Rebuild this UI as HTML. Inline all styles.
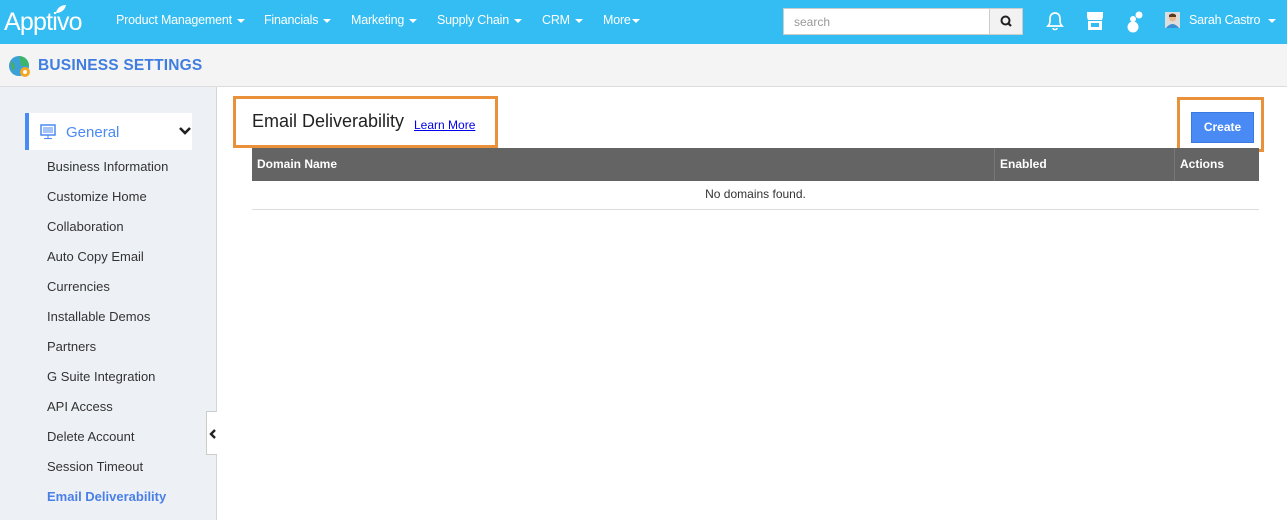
<!DOCTYPE html>
<html><head><meta charset="utf-8"><style>
*{margin:0;padding:0;box-sizing:border-box}
body{width:1287px;height:520px;overflow:hidden;font-family:"Liberation Sans",Arial,sans-serif;background:#fff;position:relative}
.top{position:absolute;left:0;top:0;width:1287px;height:44px;background:#33bdf2;color:#fff}
.logo{position:absolute;left:4px;top:8px;font-size:25px;letter-spacing:-0.8px}
.nav{position:absolute;top:13px;font-size:12.5px;letter-spacing:-0.2px}
.car{display:inline-block;width:0;height:0;border-left:4px solid transparent;border-right:4px solid transparent;border-top:4px solid #fff;vertical-align:middle;margin-left:5px}
.search{position:absolute;left:783px;top:8px;width:240px;height:27px;background:#fff;border:1px solid #ccc}
.search span{position:absolute;left:10px;top:6px;font-size:12px;color:#999}
.search .btn{position:absolute;right:0;top:0;width:33px;height:25px;background:#f2f2f2;border-left:1px solid #ccc}
.sub{position:absolute;left:0;top:44px;width:1287px;height:43px;background:#f4f4f4;border-bottom:1px solid #ddd}
.sub .t{position:absolute;left:38px;top:13px;font-size:15.5px;font-weight:bold;color:#3f7ee0;letter-spacing:0.2px}
.side{position:absolute;left:0;top:87px;width:217px;height:433px;background:#edf0f5;border-right:1px solid #d6d6d6}
.gen{position:absolute;left:25px;top:26px;width:167px;height:37px;background:#fff;border-left:4px solid #4a8af4}
.gen span{position:absolute;left:37px;top:11px;font-size:15px;color:#4a8af4}
.item{position:absolute;left:47px;font-size:13px;color:#333}
.tab{position:absolute;left:206px;top:411px;width:11px;height:44px;background:#fff;border:1px solid #ccc;border-right:none}
.ob{position:absolute;border:3px solid #e8913a}
.th{position:absolute;left:252px;top:148px;width:1007px;height:33px;background:#646464;color:#fff;font-size:12px;font-weight:bold}
.th span{position:absolute;top:9px}
</style></head><body>
<div class="top">
<div class="logo">Apptivo</div>
<svg style="position:absolute;left:55px;top:4px" width="12" height="10"><path d="M1 9 C2 3 7 1 11 1 C10 6 6 9 1 9Z" fill="#fff"/></svg>
<div class="nav" style="left:116px">Product Management<i class="car"></i></div>
<div class="nav" style="left:264px">Financials<i class="car"></i></div>
<div class="nav" style="left:351px">Marketing<i class="car"></i></div>
<div class="nav" style="left:437px">Supply Chain<i class="car"></i></div>
<div class="nav" style="left:542px">CRM<i class="car"></i></div>
<div class="nav" style="left:603px">More<i class="car" style="margin-left:1px"></i></div>
<div class="search"><span>search</span><div class="btn"><svg width="33" height="25"><circle cx="15.5" cy="11.5" r="4" stroke="#222" stroke-width="2" fill="none"/><path d="M18.5 14.5 L21 17" stroke="#222" stroke-width="2.2"/></svg></div></div>
<svg style="position:absolute;left:1045px;top:10px" width="20" height="22"><path d="M3 16 C5 14 5 12 5 9 C5 5 7 3 10 3 C13 3 15 5 15 9 C15 12 15 14 17 16 Z" stroke="#fff" stroke-width="1.7" fill="none"/><path d="M8 18 C8 20 12 20 12 18" stroke="#fff" stroke-width="1.5" fill="none"/></svg>
<svg style="position:absolute;left:1085px;top:11px" width="20" height="22"><rect x="2" y="1" width="16" height="5" fill="#fff"/><path d="M2 6 h16 l-1 3 h-14z" fill="#fff"/><rect x="3" y="10" width="14" height="9" fill="#fff"/><rect x="6" y="12" width="8" height="4" fill="#33bdf2"/></svg>
<svg style="position:absolute;left:1125px;top:10px" width="20" height="24"><circle cx="14" cy="5" r="3.5" fill="#fff"/><circle cx="8" cy="9" r="3" fill="#fff"/><circle cx="8" cy="17" r="5.5" fill="#fff"/></svg>
<svg style="position:absolute;left:1165px;top:12px" width="15" height="16"><rect width="15" height="16" fill="#ddd"/><circle cx="7.5" cy="6" r="3.5" fill="#e9b98f"/><path d="M4 3 Q7.5 0 11 3 L11 5 L4 5Z" fill="#5a3b22"/><path d="M1 16 Q7.5 8 14 16Z" fill="#3b8fd0"/></svg>
<div class="nav" style="left:1189px">Sarah Castro<i class="car" style="margin-left:8px"></i></div>
</div>
<div class="sub">
<svg style="position:absolute;left:8px;top:11px" width="24" height="24"><circle cx="11" cy="11" r="10" fill="#3aa0d8"/><path d="M11 1 A10 10 0 0 1 21 11 L13 11 Z" fill="#3cb56c"/><path d="M3 6 Q8 9 6 16 Q3 13 3 6Z" fill="#4caf50"/><circle cx="17" cy="17" r="5" fill="#f5a623"/><circle cx="17" cy="17" r="2" fill="#fff"/></svg>
<div class="t">BUSINESS SETTINGS</div>
</div>
<div class="side">
<div class="gen"><svg style="position:absolute;left:11px;top:11px" width="16" height="16"><rect x="1" y="1" width="14" height="10" fill="none" stroke="#4a8af4" stroke-width="1.5"/><path d="M3 4h10M3 6h10M3 8h10M8 11v3M4 14.5h8" stroke="#4a8af4" stroke-width="1"/></svg><span>General</span>
<svg style="position:absolute;left:149px;top:13px" width="14" height="10"><path d="M2 2 L7 7 L12 2" stroke="#222" stroke-width="2.6" fill="none"/></svg></div>
<div class="item" style="top:72px">Business Information</div>
<div class="item" style="top:102px">Customize Home</div>
<div class="item" style="top:132px">Collaboration</div>
<div class="item" style="top:162px">Auto Copy Email</div>
<div class="item" style="top:192px">Currencies</div>
<div class="item" style="top:222px">Installable Demos</div>
<div class="item" style="top:252px">Partners</div>
<div class="item" style="top:282px">G Suite Integration</div>
<div class="item" style="top:312px">API Access</div>
<div class="item" style="top:342px">Delete Account</div>
<div class="item" style="top:372px">Session Timeout</div>
<div class="item" style="top:402px;color:#4a7fe8;font-weight:bold">Email Deliverability</div>
</div>
<div class="tab"><svg style="position:absolute;left:1px;top:17px" width="9" height="10"><path d="M7 1 L3 5 L7 9" stroke="#222" stroke-width="2.4" fill="none"/></svg></div>
<div class="ob" style="left:233px;top:96px;width:265px;height:52px"></div>
<div style="position:absolute;left:252px;top:111px;font-size:18px;color:#222">Email Deliverability</div>
<div style="position:absolute;left:414px;top:118px;font-size:12px;color:#00e;text-decoration:underline">Learn More</div>
<div class="ob" style="left:1177px;top:97px;width:87px;height:55px"></div>
<div style="position:absolute;left:1191px;top:112px;width:63px;height:31px;background:#4a8af4;border:1px solid #3a7ae0;color:#fff;font-size:12px;font-weight:bold;text-align:center;line-height:29px">Create</div>
<div class="th"><span style="left:5px">Domain Name</span><span style="left:748px">Enabled</span><span style="left:928px">Actions</span>
<div style="position:absolute;left:742px;top:0;width:1px;height:33px;background:#777"></div><div style="position:absolute;left:922px;top:0;width:1px;height:33px;background:#777"></div></div>
<div style="position:absolute;left:252px;top:187px;width:1007px;text-align:center;font-size:12px;color:#333">No domains found.</div>
<div style="position:absolute;left:252px;top:209px;width:1007px;height:1px;background:#ddd"></div>
</body></html>
